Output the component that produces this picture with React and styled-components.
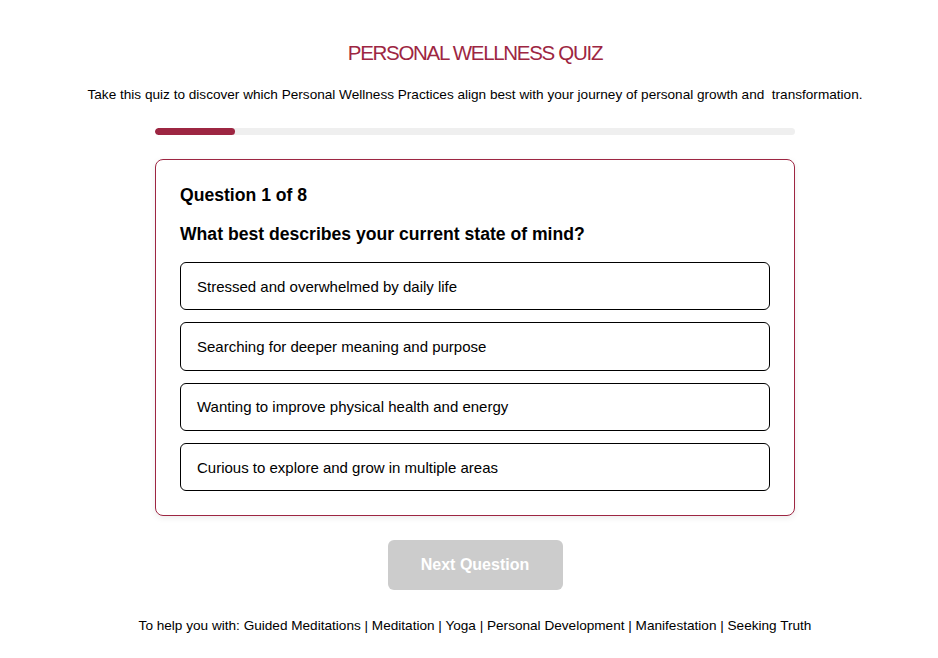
import React, { useState } from "react";
import styled, { createGlobalStyle } from "styled-components";

const Global = createGlobalStyle`
  html, body { margin: 0; padding: 0; background: #fff; }
  body { font-family: "Liberation Sans", Arial, sans-serif; color: #000; }
  * { box-sizing: border-box; }
`;

const Page = styled.div`
  display: flex;
  flex-direction: column;
  align-items: center;
  padding: 40px 0 0 12px;
`;

const Title = styled.h1`
  margin: 0;
  font-size: 20.5px;
  font-weight: normal;
  letter-spacing: -1.3px;
  line-height: 26px;
  color: #9d2642;
  text-transform: uppercase;
`;

const Subtitle = styled.p`
  margin: 20px 0 0;
  font-size: 13.6px;
  line-height: 18px;
`;

const Track = styled.div`
  margin-top: 24px;
  width: 640px;
  height: 7px;
  border-radius: 4px;
  background: #efefef;
  overflow: hidden;
`;

const Fill = styled.div`
  height: 100%;
  background: #9d2642;
  border-radius: 4px;
`;

const Card = styled.div`
  margin-top: 24px;
  width: 640px;
  border: 1px solid #9d2642;
  border-radius: 8px;
  padding: 24px;
  box-shadow: 0 2px 6px rgba(0, 0, 0, 0.08);
  display: flex;
  flex-direction: column;
`;

const Counter = styled.div`
  font-size: 17.6px;
  font-weight: bold;
  line-height: 22px;
`;

const Question = styled.div`
  margin-top: 17px;
  font-size: 17.6px;
  font-weight: bold;
  line-height: 22px;
`;

const Options = styled.div`
  margin-top: 17px;
  display: flex;
  flex-direction: column;
  gap: 12px;
`;

const Option = styled.button`
  all: unset;
  box-sizing: border-box;
  height: 48.3px;
  padding: 0 16px;
  display: flex;
  align-items: center;
  border: 1px solid ${(p) => (p.$selected ? "#9d2642" : "#000")};
  background: ${(p) => (p.$selected ? "#f9eef1" : "#fff")};
  border-radius: 6px;
  font-family: "Liberation Sans", Arial, sans-serif;
  font-size: 15px;
  cursor: pointer;
`;

const Next = styled.button`
  margin-top: 24px;
  width: 175px;
  height: 50px;
  border: none;
  border-radius: 6px;
  background: #cccccc;
  color: #fff;
  font-family: "Liberation Sans", Arial, sans-serif;
  font-size: 16px;
  font-weight: bold;
`;

const Footer = styled.p`
  margin: 27px 0 0;
  font-size: 13.6px;
  line-height: 18px;
`;

const options = [
  "Stressed and overwhelmed by daily life",
  "Searching for deeper meaning and purpose",
  "Wanting to improve physical health and energy",
  "Curious to explore and grow in multiple areas",
];

export default function App() {
  const [sel, setSel] = useState(null);
  return (
    <>
      <Global />
      <Page>
        <Title>Personal Wellness Quiz</Title>
        <Subtitle>
          Take this quiz to discover which Personal Wellness Practices align best with your journey of personal growth and&nbsp; transformation.
        </Subtitle>
        <Track>
          <Fill style={{ width: `${(1 / 8) * 100}%` }} />
        </Track>
        <Card>
          <Counter>Question 1 of 8</Counter>
          <Question>What best describes your current state of mind?</Question>
          <Options>
            {options.map((o, i) => (
              <Option key={o} $selected={sel === i} onClick={() => setSel(i)}>
                {o}
              </Option>
            ))}
          </Options>
        </Card>
        <Next disabled={sel === null}>Next Question</Next>
        <Footer>
          To help you with: Guided Meditations | Meditation | Yoga | Personal Development | Manifestation | Seeking Truth
        </Footer>
      </Page>
    </>
  );
}
